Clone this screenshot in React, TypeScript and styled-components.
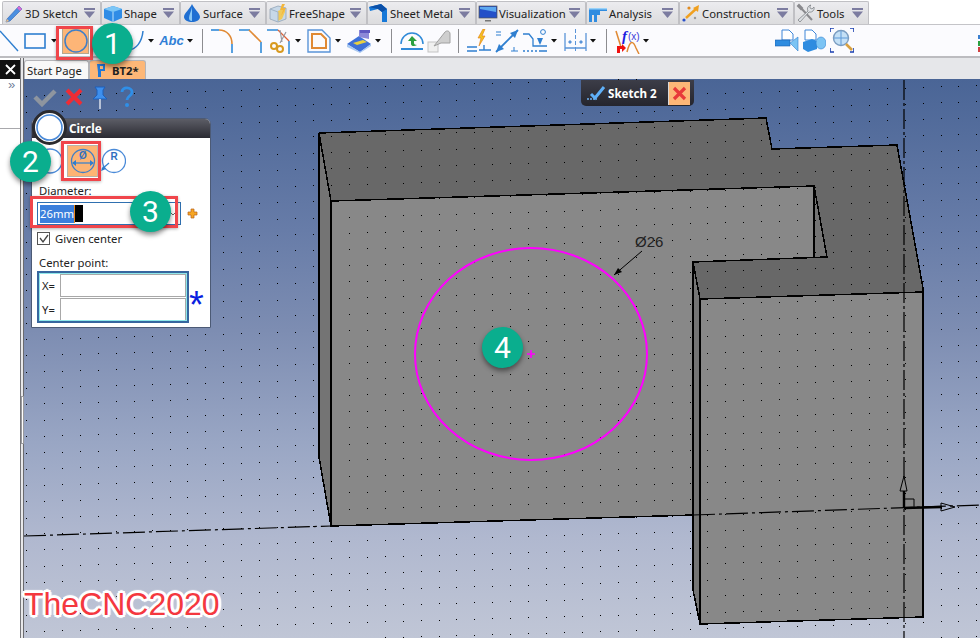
import React from 'react';
import styled, { createGlobalStyle } from 'styled-components';

const Global = createGlobalStyle`
  html, body {
    margin: 0;
    background: #fff;
    overflow: hidden;
  }
  * {
    box-sizing: border-box;
  }
`;

const Page = styled.div`
  position: relative;
  width: 980px;
  height: 638px;
  overflow: hidden;
  display: flex;
  flex-direction: column;
  font-family: 'Noto Sans', 'Open Sans', sans-serif;
  font-size: 11.3px;
  color: #222;
`;

const TabBar = styled.div`
  display: flex;
  height: 24px;
  padding: 1px 0 0 2px;
  background: #fff;
`;
const Tab = styled.div<{ $w: number }>`
  width: ${(p) => p.$w}px;
  display: flex;
  align-items: center;
  gap: 1px;
  padding: 0 5px 0 1px;
  background: linear-gradient(#ececef, #dcdcde);
  border: 1px solid #c0c0c4;
  border-bottom: none;
  border-radius: 2px 2px 0 0;
  white-space: nowrap;
  svg:last-child {
    margin-left: auto;
  }
`;

const Toolbar = styled.div`
  display: flex;
  align-items: center;
  height: 34px;
  overflow: hidden;
  background: #fbfbfe;
  border-top: 1px solid #c4c4c8;
  border-bottom: 2px solid #bcbcc0;
`;
const Slot = styled.span<{ $w: number; $ml?: number }>`
  flex: none;
  display: flex;
  align-items: center;
  justify-content: center;
  width: ${(p) => p.$w}px;
  margin-left: ${(p) => p.$ml || 0}px;
`;
const ActiveTool = styled(Slot)`
  height: 26px;
  background: #fdb577;
  border: 1px solid #b5a78f;
`;
const Sep = styled(Slot)`
  height: 24px;
  background: #8c8c90;
`;
const AbcLabel = styled.span`
  font: italic bold 13px 'Liberation Sans', sans-serif;
  color: #2f7fd6;
`;

const Main = styled.div`
  flex: 1;
  min-height: 0;
  display: flex;
`;
const Dock = styled.div`
  flex: none;
  position: relative;
  width: 24px;
  padding-top: 2px;
  background: #fff;
  border-right: 1px solid #6a6a6e;
`;
const DockClose = styled.div`
  height: 19px;
  width: 21px;
  background: #111;
  color: #fff;
  display: flex;
  align-items: center;
  justify-content: center;
`;
const DockSection = styled.div`
  height: 50px;
  width: 20px;
  border-bottom: 1px solid #a8a8ac;
  padding: 0 0 0 8px;
  font: 13px/12px 'Liberation Sans', sans-serif;
  color: #70809c;
`;
const DockEdge = styled.div`
  position: absolute;
  top: 0;
  bottom: 0;
  left: 20px;
  width: 3px;
  background: #e8e8ea;
  border-left: 1px solid #77777b;
`;
const DockHandle = styled.div`
  position: absolute;
  top: 338px;
  left: 21px;
  width: 3px;
  height: 48px;
  background: #fff;
  border: 1px solid #9a9a9e;
`;

const Workspace = styled.div`
  flex: 1;
  min-width: 0;
  display: flex;
  flex-direction: column;
`;
const DocTabs = styled.div`
  display: flex;
  align-items: flex-end;
  height: 21px;
  background: #e6e7ea;
`;
const DocTab = styled.div<{ $active?: boolean }>`
  height: 19px;
  display: flex;
  align-items: center;
  gap: 6px;
  width: ${(p) => (p.$active ? 57 : 65)}px;
  padding: 0 ${(p) => (p.$active ? 6 : 2)}px;
  background: ${(p) => (p.$active ? '#fdb777' : '#f8f8f8')};
  border: 1px solid #b4b4b8;
  border-bottom: none;
  border-radius: 3px 3px 0 0;
  font-weight: ${(p) => (p.$active ? 700 : 400)};
  white-space: nowrap;
`;

const Viewport = styled.div`
  flex: 1;
  position: relative;
  overflow: hidden;
  background: linear-gradient(#4a6596 0%, #677ca8 27%, #7d8db2 45%, #99a6c4 65%, #b0b8cf 82%, #c0c6d6 100%);
`;
const Scene = styled.svg`
  position: absolute;
  inset: 0;
`;
const SceneText = styled.text`
  font: 15px 'Liberation Sans', sans-serif;
  fill: #222;
`;

const Actions = styled.div`
  position: absolute;
  left: 9px;
  top: 6px;
  display: flex;
  align-items: center;
  gap: 8px;
  svg:last-child {
    margin-left: 3px;
  }
`;

const SketchBar = styled.div`
  position: absolute;
  left: 557px;
  top: 1px;
  width: 113px;
  height: 26px;
  display: flex;
  align-items: center;
  padding-left: 5px;
  background: linear-gradient(#3c3d48, #25252d);
  border-radius: 0 0 5px 5px;
  color: #fff;
  font-size: 11.6px;
  font-weight: 700;
  gap: 2px;
`;
const SketchClose = styled.div`
  width: 22px;
  height: 23px;
  margin-left: auto;
  margin-right: 4px;
  padding-left: 3px;
  display: flex;
  align-items: center;
  background: #fdb777;
  border-left: 1px solid #d9d9d9;
`;

const Panel = styled.div`
  position: absolute;
  left: 7px;
  top: 39px;
  width: 180px;
  height: 210px;
  background: #fff;
  border: 1px solid #4c5a75;
  border-radius: 6px 6px 0 0;
`;
const PanelHeader = styled.div`
  height: 19px;
  padding-left: 37px;
  background: linear-gradient(#5c5d66, #2a2a32);
  border-radius: 5px 5px 0 0;
  color: #fff;
  font-size: 11.8px;
  font-weight: 700;
  line-height: 19px;
`;
const PanelLogo = styled.div`
  position: absolute;
  left: 0;
  top: -9px;
  width: 35px;
  height: 35px;
  display: flex;
  align-items: center;
  justify-content: center;
  background: #fff;
  border: 3px solid #2a2a2e;
  border-radius: 50%;
`;
const PanelBody = styled.div`
  display: flex;
  flex-direction: column;
  padding: 7px 5px 0;
`;
const Modes = styled.div`
  display: flex;
  align-items: center;
  height: 32px;
`;
const ModeButton = styled.div<{ $active?: boolean; $ml: number }>`
  width: ${(p) => (p.$active ? 31 : 26)}px;
  height: ${(p) => (p.$active ? 32 : 26)}px;
  margin-left: ${(p) => p.$ml}px;
  display: flex;
  align-items: center;
  justify-content: center;
  background: ${(p) => (p.$active ? '#fdb474' : 'transparent')};
  border: ${(p) => (p.$active ? '1px solid #b9b3a8' : 'none')};
`;
const FieldLabel = styled.div<{ $mt: number }>`
  margin: ${(p) => p.$mt}px 0 0 2px;
  height: 15px;
  line-height: 15px;
`;
const DiameterRow = styled.div`
  display: flex;
  align-items: center;
  margin-top: 4px;
  gap: 6px;
`;
const DiameterInput = styled.div`
  flex: none;
  width: 144px;
  height: 23px;
  display: flex;
  align-items: center;
  padding: 0 3px 0 2px;
  border: 1px solid #2f70b0;
  line-height: 18px;
  svg {
    margin-left: auto;
  }
`;
const Selected = styled.span`
  background: #3b7fdc;
  color: #fff;
  border-right: 1px solid #e98a1c;
`;
const CaretBlock = styled.span`
  width: 8px;
  height: 17px;
  background: #000;
`;
const CheckRow = styled.div`
  display: flex;
  align-items: center;
  gap: 5px;
  margin-top: 7px;
  height: 13px;
`;
const CheckBox = styled.div`
  width: 13px;
  height: 13px;
  border: 1px solid #555;
  display: flex;
  align-items: center;
  justify-content: center;
`;
const PointRow = styled.div`
  display: flex;
  align-items: flex-start;
  height: 52px;
  gap: 1px;
  margin-top: 1px;
`;
const PointBox = styled.div`
  flex: none;
  width: 152px;
  height: 52px;
  padding: 1px 1px 1px 2px;
  border: 2px solid #37679f;
  outline: 1px solid #8fe8ea;
  outline-offset: -3px;
  display: flex;
  flex-direction: column;
  justify-content: center;
  gap: 1px;
`;
const AxisField = styled.div`
  display: flex;
  align-items: center;
  height: 23px;
  padding-left: 1px;
  gap: 1px;
  span {
    width: 17px;
  }
`;
const AxisInput = styled.div`
  flex: 1;
  height: 23px;
  border: 1px solid #a8a8a8;
  background: #fff;
`;
const Asterisk = styled.span`
  font: 400 38px/38px 'Liberation Sans', sans-serif;
  color: #0a1fe0;
  margin: 15px 0 0 -1px;
`;

const Highlight = styled.div<{ $x: number; $y: number; $w: number; $h: number }>`
  position: absolute;
  left: ${(p) => p.$x}px;
  top: ${(p) => p.$y}px;
  width: ${(p) => p.$w}px;
  height: ${(p) => p.$h}px;
  border: 3px solid #f0454b;
  box-shadow: 0 1px 3px rgba(0, 0, 0, 0.3);
`;
const Badge = styled.div<{ $x: number; $y: number }>`
  position: absolute;
  left: ${(p) => p.$x - 20}px;
  top: ${(p) => p.$y - 20}px;
  width: 41px;
  height: 41px;
  border-radius: 50%;
  display: flex;
  align-items: center;
  justify-content: center;
  background: #0aae8e;
  box-shadow: 0 3px 5px rgba(0, 0, 0, 0.45);
  color: #fff;
  font: 30px 'Roboto', 'Liberation Sans', sans-serif;
`;
const Watermark = styled.div`
  position: absolute;
  left: 24px;
  top: 586px;
  font: 32px/36px 'Liberation Sans', sans-serif;
  color: #f4383f;
  text-shadow: 2px 0 0 #fff, -2px 0 0 #fff, 0 2px 0 #fff, 0 -2px 0 #fff,
    2px 2px 0 #fff, -2px 2px 0 #fff, 2px -2px 0 #fff, -2px -2px 0 #fff,
    3px 0 1px #fff, -3px 0 1px #fff, 0 3px 1px #fff, 0 -3px 1px #fff;
`;

function Ico({ w, h, children }: { w: number; h: number; children: React.ReactNode }) {
  return (
    <svg width={w} height={h} viewBox={`0 0 ${w} ${h}`} fill="none">
      {children}
    </svg>
  );
}

const Caret = () => (
  <Ico w={6} h={4}>
    <path d="M0 0h6L3 3.5z" fill="#111" />
  </Ico>
);

const TabArrow = () => (
  <Ico w={11} h={11}>
    <path d="M0 0h11v2H0z" fill="#7c7ca0" />
    <path d="M0 3.5h11L5.5 10z" fill="#7c7ca0" />
  </Ico>
);

// ribbon tab icons
const SketchIco = () => (
  <Ico w={20} h={20}>
    <path d="M3 16 15 3l3 3L6 18l-4 1z" fill="#4a8fe0" stroke="#2f5fb0" strokeWidth=".6" />
    <path d="M13 5l2-2 3 3-2 2z" fill="#d86ad0" />
    <path d="M2 19l1-3 2 2z" fill="#f4c080" />
  </Ico>
);
const ShapeIco = () => (
  <Ico w={20} h={20}>
    <path d="M1 6 10 3l9 3v9l-9 4-9-4z" fill="#2f8ce6" />
    <path d="M1 6l9 3 9-3-9-3z" fill="#7cc6f6" />
    <path d="M10 9v10" stroke="#bfe3fb" />
  </Ico>
);
const SurfaceIco = () => (
  <Ico w={20} h={20}>
    <path d="M10 1c2 5 8 9 8 13 0 3-4 5-8 5s-8-2-8-5c0-4 6-8 8-13z" fill="#1f6fd2" />
    <path d="M10 4c-1 5-3 8-3 11 0 2 1 3 3 3z" fill="#8ac8f6" />
  </Ico>
);
const FreeShapeIco = () => (
  <Ico w={20} h={20}>
    <path d="M2 6l8-3 8 2v11l-8 3-8-3z" fill="#c7d8e8" stroke="#8a9cb0" strokeWidth=".7" />
    <path d="M10 8l7-3v4l-3 7-4 2z" fill="#f0c95a" />
    <path d="M2 6l8 3v10" stroke="#9fb2c6" />
    <path d="M14 1l-2 6h3l-2 6 5-8h-3l2-4z" fill="#f4b63a" />
  </Ico>
);
const SheetIco = () => (
  <Ico w={20} h={20}>
    <path d="M0 4 12 1l6 5v13h-5V9L9 6 1 8z" fill="#1678d8" />
    <path d="M0 4 12 1l6 5-5 3-4-3z" fill="#0a4fa8" />
  </Ico>
);
const MonitorIco = () => (
  <Ico w={20} h={20}>
    <rect x="1" y="3" width="18" height="12" fill="#2450c8" stroke="#555" strokeWidth=".7" />
    <path d="M2 4h16v5L2 6z" fill="#5ca8f0" />
    <path d="M7 17h6v1.5H7z" fill="#777" />
  </Ico>
);
const AnalysisIco = () => (
  <Ico w={20} h={20}>
    <path d="M1 5h18v3H12v4H9v7H6v-7H4v7H1z" fill="#2f8ce0" />
    <path d="M1 5h18v1.5H1z" fill="#9ad2f8" />
  </Ico>
);
const ConstructionIco = () => (
  <Ico w={20} h={20}>
    <path d="M5 15 16 5" stroke="#f0a020" strokeWidth="2.4" />
    <path d="M18 2l-1 7-5-4z" fill="#f0a020" />
    <circle cx="3" cy="17" r="1.6" fill="#2a50c8" />
    <circle cx="8" cy="5" r="1.6" fill="#e08a20" />
    <circle cx="14" cy="15" r="1.2" fill="#999" />
  </Ico>
);
const ToolsIco = () => (
  <Ico w={20} h={20}>
    <path d="M3 2l3 3-1 1-3-3zM5 5l11 12" stroke="#8a8a8e" strokeWidth="2" />
    <path d="M15 2a4 4 0 0 0-3 6L2 17l2 2 9-10a4 4 0 0 0 5-5l-2 2-2-1V3z" fill="#dfe2e6" stroke="#808488" strokeWidth=".8" />
  </Ico>
);

// sketch toolbar icons
const LineIco = () => (
  <Ico w={19} h={22}>
    <path d="M0 1l18 20" stroke="#2f7fd0" strokeWidth="1.4" />
  </Ico>
);
const RectIco = () => (
  <Ico w={22} h={16}>
    <rect x="1" y="1" width="20" height="14" stroke="#2f7fd0" strokeWidth="1.6" />
  </Ico>
);
const ArcIco = () => (
  <Ico w={18} h={22}>
    <path d="M1 20c8 0 14-8 15-19" stroke="#2f7fd0" strokeWidth="1.5" />
  </Ico>
);
const FilletIco = () => (
  <Ico w={23} h={24}>
    <path d="M0 1h8" stroke="#2f8ad8" strokeWidth="1.6" />
    <path d="M8 1c8 0 13 6 13 14" stroke="#e08a35" strokeWidth="1.6" />
    <path d="M21 15v9" stroke="#2f8ad8" strokeWidth="1.6" />
  </Ico>
);
const ChamferIco = () => (
  <Ico w={23} h={24}>
    <path d="M0 1h11M22 13v11" stroke="#2f8ad8" strokeWidth="1.6" />
    <path d="M10 1l12 12" stroke="#e08a35" strokeWidth="1.6" />
  </Ico>
);
const TrimIco = () => (
  <Ico w={23} h={26}>
    <path d="M0 2h11M22 13v13" stroke="#2f8ad8" strokeWidth="1.5" />
    <path d="M11 2l11 11" stroke="#e06035" strokeWidth="1.3" />
    <path d="M13 2l2 12M19 4l-6 11" stroke="#9a9aa0" strokeWidth="1.2" />
    <circle cx="7" cy="18" r="3" stroke="#d89a20" strokeWidth="2" />
    <circle cx="13" cy="21" r="3" stroke="#d89a20" strokeWidth="2" />
  </Ico>
);
const OffsetIco = () => (
  <Ico w={24} h={24}>
    <path d="M1 1h14l8 8v14H1z" stroke="#5a94d8" strokeWidth="1.4" />
    <path d="M5 5h9l5 5v9H5z" stroke="#e08a35" strokeWidth="2" />
  </Ico>
);
const ProjectIco = () => (
  <Ico w={25} h={26}>
    <path d="M0 16 12 8l12 8-11 8z" fill="#3d70d8" />
    <path d="M12 2h10v9L12 9z" fill="#8c88d8" />
    <path d="M13 2h10v3H13z" fill="#5f58c0" />
    <path d="M6 15l10-3 4 2-10 3z" fill="#e8d040" />
    <path d="M0 16v3l13 6 11-7v-2l-11 8z" fill="#a8c8f0" />
  </Ico>
);
const ConvertIco = () => (
  <Ico w={24} h={24}>
    <path d="M1 15a11 11 0 0 1 22 0" stroke="#2f8ad8" strokeWidth="1.5" />
    <path d="M1 20h22" stroke="#2f8ad8" strokeWidth="2" />
    <path d="M12 7l-4 5h3v3c0 2 3 3 6 1-2 0-3-1-3-2v-2h3z" fill="#2aa040" />
  </Ico>
);
const GreyIco = () => (
  <Ico w={24} h={26}>
    <rect x="1" y="14" width="10" height="10" fill="#f0f0f0" stroke="#c4c4c4" />
    <path d="M7 18 18 4c2-2 5-1 5 2v9h-9z" fill="#cfcfcf" stroke="#a0a0a0" />
  </Ico>
);
const SmartIco = () => (
  <Ico w={24} h={24}>
    <path d="M0 18h10M0 22h10M12 21h12M17 21v-5" stroke="#2f7fd0" strokeWidth="1.4" />
    <path d="M16 0 11 9h3l-2 8 6-10h-3l3-7z" fill="#f4c020" stroke="#e07a18" strokeWidth=".6" />
  </Ico>
);
const DistanceIco = () => (
  <Ico w={24} h={24}>
    <path d="M1 23 23 1" stroke="#2f7fd0" strokeWidth="1.8" />
    <path d="M1 23l3-8 5 5zM23 1l-3 8-5-5z" fill="#2f7fd0" />
    <path d="M1 3h5M1 6h5M16 22h7M19 22v-4" stroke="#2f7fd0" strokeWidth="1" />
  </Ico>
);
const StepIco = () => (
  <Ico w={24} h={24}>
    <path d="M0 5h6l4 5v7h14" stroke="#2f7fd0" strokeWidth="1.3" />
    <path d="M0 22h2M4 22h2M8 22h2M12 22h2M16 22h8" stroke="#2f7fd0" strokeWidth="1.3" />
    <path d="M14 9h6l-3 7z" fill="#2f7fd0" />
    <circle cx="20" cy="3" r="2.4" stroke="#2f7fd0" />
  </Ico>
);
const SymmetryIco = () => (
  <Ico w={23} h={24}>
    <path d="M1 4v18M22 4v18M1 19h21" stroke="#5a94d8" strokeWidth="1.3" />
    <path d="M11.500 0v24" stroke="#5a94d8" strokeDasharray="4 2" />
    <path d="M6 11l2 2-2 2-2-2zM17 11l2 2-2 2-2-2z" fill="#5a94d8" />
  </Ico>
);
const FormulaIco = () => (
  <Ico w={26} h={26}>
    <path d="M1 3l5 16" stroke="#e08a35" strokeWidth="1.5" />
    <path d="M12 24c3-12 6-12 9-4l3 6" stroke="#e08a35" strokeWidth="1.5" />
    <path d="M2 25v-7h5v-2l4 4-4 4v-3H5v4z" fill="#f01010" />
    <text x="7" y="13" fontFamily="'Liberation Serif', serif" fontStyle="italic" fontWeight="700" fontSize="15" fill="#1a1ae0">f</text>
    <text x="13" y="12" fontFamily="'Liberation Sans', sans-serif" fontSize="10" fill="#3a3ad8">(x)</text>
  </Ico>
);
const ViewLeftIco = () => (
  <Ico w={24} h={24}>
    <path d="M7 1h7l4 4v6H7z" fill="#fff" stroke="#3f86d8" />
    <path d="M0 11h15v6H0z" fill="#2f8ce0" stroke="#1a5fb0" strokeWidth=".6" />
    <path d="M15 14l8-6v14z" fill="#7cc4f4" stroke="#2f7fd0" strokeWidth=".6" />
  </Ico>
);
const ViewRightIco = () => (
  <Ico w={24} h={24}>
    <path d="M3 1h7l4 4v6H3z" fill="#fff" stroke="#3f86d8" />
    <path d="M1 13l9-3 5 2v8l-9 3-5-3z" fill="#2f8ce0" />
    <ellipse cx="19" cy="14" rx="5" ry="6" fill="#7cc4f4" stroke="#2f7fd0" strokeWidth=".6" />
  </Ico>
);
const FitIco = () => (
  <Ico w={24} h={25}>
    <path d="M0 4V0h4M20 0h4v4M0 20v4h4M24 20v4h-4" stroke="#1a3fb0" strokeWidth="1.6" />
    <circle cx="11" cy="10" r="7.500" fill="#c4e0f6" stroke="#7a9cc0" strokeWidth="1.4" />
    <path d="M11 3v14M4 10h14" stroke="#5f9ad8" />
    <path d="M16 16l6 6" stroke="#d8a040" strokeWidth="2.6" />
  </Ico>
);
const FarIco = () => (
  <Ico w={3} h={24}>
    <path d="M0 6h3v4H0z" fill="#3a7fd0" />
    <path d="M0 12h3v5H0z" fill="#2aa040" />
    <path d="M0 18h3v5H0z" fill="#d04040" />
  </Ico>
);

const tabs: { w: number; label: string; icon: React.ReactNode }[] = [
  { w: 99, label: '3D Sketch', icon: <SketchIco /> },
  { w: 79, label: 'Shape', icon: <ShapeIco /> },
  { w: 86, label: 'Surface', icon: <SurfaceIco /> },
  { w: 101, label: 'FreeShape', icon: <FreeShapeIco /> },
  { w: 109, label: 'Sheet Metal', icon: <SheetIco /> },
  { w: 110, label: 'Visualization', icon: <MonitorIco /> },
  { w: 93, label: 'Analysis', icon: <AnalysisIco /> },
  { w: 115, label: 'Construction', icon: <ConstructionIco /> },
  { w: 75, label: 'Tools', icon: <ToolsIco /> },
];

// grid dots of the sketch plane, rows lean up a little to the right
function gridDots() {
  let d = '';
  for (let c = -1; c < 55; c++) {
    for (let r = -1; r < 40; r++) {
      const x = 313 + (c - 16) * 17.93;
      const y = 104 + r * 16.22 - Math.round((x - 313) * 0.0283 * 2) / 2;
      d += `M${Math.round(x)} ${Math.round(y)}h1v1h-1z`;
    }
  }
  return d;
}

function Model() {
  const edge = { stroke: '#000', strokeWidth: 1.5, shapeRendering: 'crispEdges' as const };
  return (
    <Scene width={956} height={559} viewBox="24 79 956 559" fill="none">
      <path d="M319 133 766 118l6 31 125-4 26 143v4l-223 7-7-37 134-5-13-71-483 15z" fill="#686868" />
      <path d="M319 133l12 68v325l-12-69z" fill="#747474" />
      <path d="M331 201l483-15v72l-121 4v253l-362 11z" fill="#888" />
      <path d="M814 186l13 71-13 1z" fill="#747474" />
      <path d="M693 262l7 37v325l-7-34z" fill="#747474" />
      <path d="M700 299l223-7v325l-223 7z" fill="#888" />
      <path d={gridDots()} fill="#000" />
      <g {...edge}>
        <path d="M331 526V201L319 133V457l12 69 362-11" />
        <path d="M319 133 766 118l6 31 125-4 26 143v329l-223 7-7-34V262l134-5-13-71-483 15" />
        <path d="M814 186v72M700 299v325M700 299l-7-37M700 299l223-7" />
      </g>
      <path d="M24 536 331 526M693 515 980 505" stroke="#000" strokeWidth="1.2" strokeDasharray="22 4 3 4" />
      <path d="M904 80V638" stroke="#000" strokeWidth="1.2" strokeDasharray="20 3 3 3" />
      <path d="M904 508V487M904 508 942 507" stroke="#000" strokeWidth="2.4" />
      <path d="M904 499h10v9" stroke="#000" strokeWidth="1" />
      <path d="M900 491l4-15 3 15z" stroke="#000" strokeWidth="1" fill="#8a8a8a" />
      <path d="M941 503v8l14-4z" stroke="#000" strokeWidth="1" />
      <ellipse cx="531" cy="354" rx="116" ry="106" stroke="#f0f" strokeWidth="2" />
      <path d="M527 354h8M531 350v8" stroke="#f0f" strokeWidth="1.6" />
      <path d="M642 251 614 275" stroke="#000" strokeWidth="1" />
      <path d="M614 275l4-7 4 4z" fill="#000" />
      <SceneText x="635" y="247">Ø26</SceneText>
    </Scene>
  );
}

function App() {
  return (
    <Page>
      <Global />
      <TabBar>
        {tabs.map((t) => (
          <Tab key={t.label} $w={t.w}>
            {t.icon}
            {t.label}
            <TabArrow />
          </Tab>
        ))}
      </TabBar>
      <Toolbar>
        <Slot $w={19}><LineIco /></Slot>
        <Slot $w={22} $ml={5}><RectIco /></Slot>
        <Slot $w={6} $ml={5}><Caret /></Slot>
        <ActiveTool $w={27} $ml={5}>
          <Ico w={24} h={24}>
            <circle cx="12" cy="12" r="11" stroke="#3f7fc8" strokeWidth="1.5" />
          </Ico>
        </ActiveTool>
        <Slot $w={18} $ml={38}><ArcIco /></Slot>
        <Slot $w={6} $ml={3}><Caret /></Slot>
        <Slot $w={21} $ml={7}><AbcLabel>Abc</AbcLabel></Slot>
        <Slot $w={6} $ml={5}><Caret /></Slot>
        <Sep $w={1} $ml={9} />
        <Slot $w={23} $ml={8}><FilletIco /></Slot>
        <Slot $w={23} $ml={5}><ChamferIco /></Slot>
        <Slot $w={23} $ml={5}><TrimIco /></Slot>
        <Slot $w={6} $ml={5}><Caret /></Slot>
        <Slot $w={24} $ml={6}><OffsetIco /></Slot>
        <Slot $w={6} $ml={4}><Caret /></Slot>
        <Slot $w={25} $ml={6}><ProjectIco /></Slot>
        <Slot $w={6} $ml={3}><Caret /></Slot>
        <Sep $w={1} $ml={10} />
        <Slot $w={24} $ml={8}><ConvertIco /></Slot>
        <Slot $w={24} $ml={3}><GreyIco /></Slot>
        <Sep $w={1} $ml={7} />
        <Slot $w={24} $ml={8}><SmartIco /></Slot>
        <Slot $w={24} $ml={4}><DistanceIco /></Slot>
        <Slot $w={24} $ml={4}><StepIco /></Slot>
        <Slot $w={6} $ml={4}><Caret /></Slot>
        <Slot $w={23} $ml={7}><SymmetryIco /></Slot>
        <Slot $w={6} $ml={3}><Caret /></Slot>
        <Sep $w={1} $ml={10} />
        <Slot $w={26} $ml={8}><FormulaIco /></Slot>
        <Slot $w={6} $ml={2}><Caret /></Slot>
        <Slot $w={24} $ml={126}><ViewLeftIco /></Slot>
        <Slot $w={24} $ml={3}><ViewRightIco /></Slot>
        <Slot $w={24} $ml={4}><FitIco /></Slot>
        <Slot $w={3} $ml={124}><FarIco /></Slot>
      </Toolbar>
      <Main>
        <Dock>
          <DockClose>
            <Ico w={11} h={11}>
              <path d="M1 1l9 9M10 1l-9 9" stroke="#fff" strokeWidth="1.8" />
            </Ico>
          </DockClose>
          <DockSection>»</DockSection>
          <DockEdge />
          <DockHandle />
        </Dock>
        <Workspace>
          <DocTabs>
            <DocTab>Start Page</DocTab>
            <DocTab $active>
              <Ico w={10} h={15}>
                <path d="M1 1h8v7H5v6H2V9z" fill="#1f78d8" />
                <path d="M4 3h3v3H4z" fill="#fdb777" />
              </Ico>
              BT2*
            </DocTab>
          </DocTabs>
          <Viewport>
            <Model />
            <Actions>
              <Ico w={24} h={20}>
                <path d="M2 10l7 7L22 4" stroke="#8e959f" strokeWidth="4.500" />
              </Ico>
              <Ico w={18} h={18}>
                <path d="M2 2l14 14M16 2 2 16" stroke="#ef2c35" strokeWidth="4" />
              </Ico>
              <Ico w={18} h={24}>
                <path d="M4 2h10l-2 3v5l4 4H2l4-4V5z" fill="#3d8fee" stroke="#1f5fb8" />
                <path d="M9 14v10" stroke="#fff" strokeWidth="1.2" />
              </Ico>
              <Ico w={14} h={22}>
                <path d="M2 6c0-6 10-5 10 0 0 4-5 4-5 8" stroke="#2f8fe8" strokeWidth="2.800" />
                <circle cx="7" cy="19" r="2" fill="#2f8fe8" />
              </Ico>
            </Actions>
            <SketchBar>
              <Ico w={20} h={16}>
                <path d="M1 14h10" stroke="#6fb4f4" strokeDasharray="2 1" strokeWidth="1.600" />
                <path d="M5 9l4 4L18 2" stroke="#5fb0f8" strokeWidth="3" />
              </Ico>
              Sketch 2
              <SketchClose>
                <Ico w={15} h={15}>
                  <path d="M2 2l11 11M13 2 2 13" stroke="#e83a3a" strokeWidth="3.200" />
                </Ico>
              </SketchClose>
            </SketchBar>
            <Panel>
              <PanelHeader>Circle</PanelHeader>
              <PanelLogo>
                <Ico w={27} h={27}>
                  <circle cx="13.500" cy="13.500" r="12.500" stroke="#4a8ad8" strokeWidth="1.600" />
                </Ico>
              </PanelLogo>
              <PanelBody>
                <Modes>
                  <ModeButton $ml={0}>
                    <Ico w={26} h={26}>
                      <circle cx="13" cy="13" r="12" stroke="#4a8ad8" strokeWidth="1.300" />
                    </Ico>
                  </ModeButton>
                  <ModeButton $active $ml={4}>
                    <Ico w={26} h={26}>
                      <circle cx="13" cy="13" r="11.500" stroke="#3f7fc8" strokeWidth="1.300" />
                      <path d="M3 15h20" stroke="#2f7fd0" strokeWidth="1.200" />
                      <path d="M2 15l4-3v6zM24 15l-4-3v6z" fill="#2f7fd0" />
                      <text x="13" y="11" textAnchor="middle" fontFamily="'Liberation Sans', sans-serif" fontWeight="700" fontSize="10" fill="#2f6fc0">Ø</text>
                    </Ico>
                  </ModeButton>
                  <ModeButton $ml={2}>
                    <Ico w={26} h={26}>
                      <circle cx="14" cy="13" r="11.500" stroke="#4a8ad8" strokeWidth="1.300" />
                      <path d="M2 21l7-6" stroke="#2f7fd0" strokeWidth="1.200" />
                      <path d="M1 23l2-5 3 3z" fill="#2f7fd0" />
                      <text x="14" y="12" textAnchor="middle" fontFamily="'Liberation Sans', sans-serif" fontWeight="700" fontSize="10" fill="#2f6fc0">R</text>
                    </Ico>
                  </ModeButton>
                </Modes>
                <FieldLabel $mt={6}>Diameter:</FieldLabel>
                <DiameterRow>
                  <DiameterInput>
                    <Selected>26mm</Selected>
                    <CaretBlock />
                    <Ico w={8} h={5}>
                      <path d="M1 1l3 3 3-3" stroke="#666" />
                    </Ico>
                  </DiameterInput>
                  <Ico w={11} h={11}>
                    <path d="M4 1h3v3h3v3H7v3H4V7H1V4h3z" fill="#f6a623" stroke="#b8621a" strokeWidth=".7" />
                  </Ico>
                </DiameterRow>
                <CheckRow>
                  <CheckBox>
                    <Ico w={11} h={11}>
                      <path d="M2 5l3 4 5-7" stroke="#444" strokeWidth="1.300" />
                    </Ico>
                  </CheckBox>
                  Given center
                </CheckRow>
                <FieldLabel $mt={10}>Center point:</FieldLabel>
                <PointRow>
                  <PointBox>
                    <AxisField>
                      <span>X=</span>
                      <AxisInput />
                    </AxisField>
                    <AxisField>
                      <span>Y=</span>
                      <AxisInput />
                    </AxisField>
                  </PointBox>
                  <Asterisk>*</Asterisk>
                </PointRow>
              </PanelBody>
            </Panel>
          </Viewport>
        </Workspace>
      </Main>
      <Highlight $x={56} $y={26} $w={37} $h={34} />
      <Highlight $x={61} $y={141} $w={40} $h={40} />
      <Highlight $x={30} $y={196} $w={148} $h={32} />
      <Badge $x={112} $y={43}>1</Badge>
      <Badge $x={30} $y={161}>2</Badge>
      <Badge $x={150} $y={211}>3</Badge>
      <Badge $x={502} $y={347}>4</Badge>
      <Watermark>TheCNC2020</Watermark>
    </Page>
  );
}

export default App;
